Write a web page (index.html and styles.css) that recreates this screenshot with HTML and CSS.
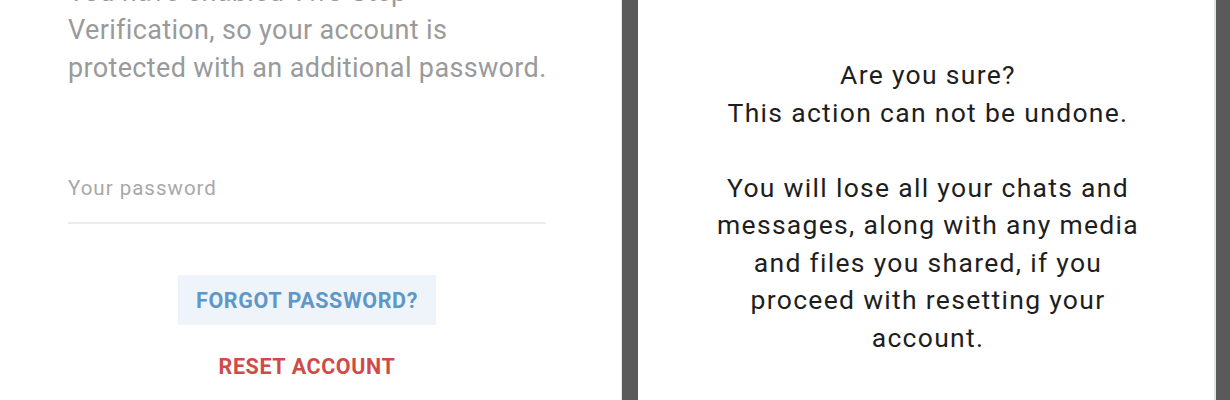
FILE: index.html
```html
<!DOCTYPE html>
<html>
<head>
<meta charset="utf-8">
<link rel="stylesheet" href="styles.css">
</head>
<body>
<div class="page">
  <section class="left">
    <p class="intro">You have enabled Two-Step<br>Verification, so your account is<br>protected with an additional password.</p>
    <div class="field"><span class="placeholder">Your password</span></div>
    <div class="actions">
      <button class="btn forgot">FORGOT PASSWORD?</button>
      <button class="btn reset">RESET ACCOUNT</button>
    </div>
  </section>
  <div class="divider"></div>
  <section class="right">
    <p class="warn">Are you sure?<br>This action can not be undone.<br><br>You will lose all your chats and<br>messages, along with any media<br>and files you shared, if you<br>proceed with resetting your<br>account.</p>
  </section>
  <div class="divider edge"></div>
</div>
</body>
</html>
```
FILE: styles.css
```css
html, body {
  margin: 0;
  padding: 0;
  background: #fff;
}
body {
  width: 1230px;
  height: 400px;
  overflow: hidden;
  font-family: Roboto, "Liberation Sans", sans-serif;
}
.page {
  display: flex;
  height: 400px;
}
.left {
  width: 621px;
  flex: none;
  box-sizing: border-box;
  padding-left: 68px;
  background: #fff;
}
.intro {
  margin: -27px 0 0 0;
  width: 540px;
  font-size: 27px;
  letter-spacing: 0.35px;
  line-height: 38px;
  color: #9a9a9a;
}
.field {
  width: 478px;
  margin-top: 85px;
  height: 50px;
  border-bottom: 2px solid #ececec;
}
.placeholder {
  display: block;
  font-size: 20.5px;
  letter-spacing: 1px;
  line-height: 24px;
  padding-top: 4px;
  color: #a8a8a8;
}
.actions {
  width: 478px;
  display: flex;
  flex-direction: column;
  align-items: center;
  margin-top: 51px;
}
.btn {
  border: none;
  background: none;
  font-family: Roboto, "Liberation Sans", sans-serif;
  font-weight: 700;
  font-size: 21.5px;
  letter-spacing: 0.6px;
  padding: 0;
}
.forgot {
  width: 258px;
  height: 50px;
  background: #eef4f9;
  color: #5f97c6;
}
.reset {
  margin-top: 26px;
  height: 30px;
  color: #cf4b4a;
}
.divider {
  width: 16px;
  flex: none;
  background: #5a5a5a;
  border-left: 1px solid #e6e6e6;
}
.divider.edge {
  width: 14px;
  border-left: 2px solid #e2e2e2;
}
.right {
  flex: 1;
  background: #fff;
  display: flex;
  justify-content: center;
  padding-left: 4px;
}
.warn {
  margin: 56px 0 0 0;
  text-align: center;
  font-size: 26.5px;
  letter-spacing: 1.3px;
  line-height: 37.5px;
  color: #1e1e1e;
}
```
